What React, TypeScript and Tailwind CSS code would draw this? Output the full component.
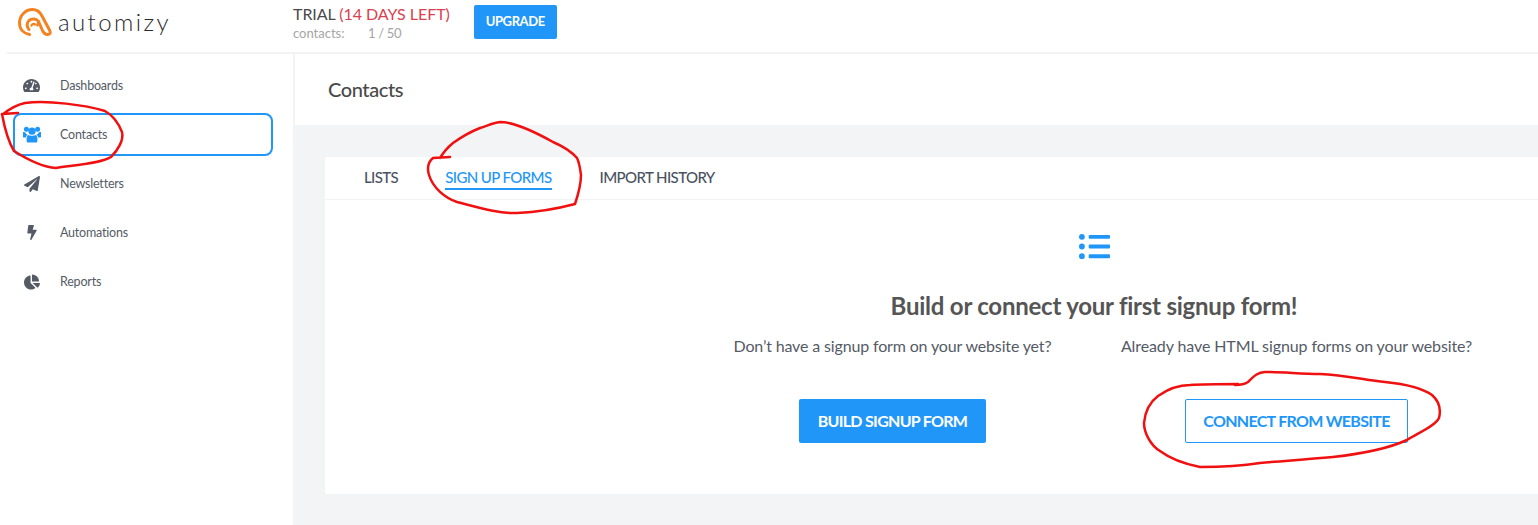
import { FaBolt, FaChartPie, FaListUl, FaPaperPlane, FaTachometerAlt } from "react-icons/fa";

function UsersIcon({ className }: { className?: string }) {
  return (
    <svg viewBox="0 0 18 17" className={className} fill="currentColor">
      <circle cx="3.4" cy="3.2" r="2.5" />
      <circle cx="14.6" cy="3.2" r="2.5" />
      <circle cx="9" cy="5.2" r="3.6" />
      <path d="M0 6.4 C0 5.8 1 6 2.2 6.4 C3 7.5 3.6 8.2 4.6 8.8 C3.6 9.6 3 10.5 2.8 11.6 H1 C.3 11.6 0 11 0 10.4 Z" />
      <path d="M18 6.4 C18 5.8 17 6 15.8 6.4 C15 7.5 14.4 8.2 13.4 8.8 C14.4 9.6 15 10.5 15.2 11.6 H17 C17.7 11.6 18 11 18 10.4 Z" />
      <path d="M5.4 9 C6.5 9.9 11.5 9.9 12.6 9 C13.8 9.6 14.4 11 14.4 13 V15 C14.4 16 13.6 16.6 12.6 16.6 H5.4 C4.4 16.6 3.6 16 3.6 15 V13 C3.6 11 4.2 9.6 5.4 9 Z" />
    </svg>
  );
}

const navItems = [
  { label: "Dashboards", Icon: FaTachometerAlt, iconClass: "w-[17px] h-[17px]" },
  { label: "Contacts", Icon: UsersIcon, iconClass: "w-[18px] h-[17px]", active: true },
  { label: "Newsletters", Icon: FaPaperPlane, iconClass: "w-[16px] h-[16px]" },
  { label: "Automations", Icon: FaBolt, iconClass: "w-[10px] h-[15px]" },
  { label: "Reports", Icon: FaChartPie, iconClass: "w-[16px] h-[16px]" },
];

function Logo() {
  return (
    <div className="flex items-center gap-[6px]">
      <svg viewBox="0 0 34 28" className="w-[34px] h-[28px]" fill="none" stroke="#f58220" strokeWidth="3" strokeLinecap="round" strokeLinejoin="round">
        <path d="M11.5 26.5 C5.5 25.5 1.5 21 1.5 15 C1.5 7.5 7.5 1.5 14.5 1.5 C19 1.5 22 4 24 8 L31.5 22 C33 25 32 26.5 29.5 26.5 C27 26.5 25.5 25 24.5 22.5 L20.5 13.5" />
        <path d="M11 21.5 C8.5 19 8.5 15 11 12.5 C14 10 18.5 10.5 20.5 13.5 C20.5 15.5 20 16.5 19.5 17" />
        <path d="M13.5 17.5 C14.5 15.5 16.5 15.5 17 16.5" strokeWidth="2.4" />
      </svg>
      <span className="font-['Lato',sans-serif] font-light text-[24px] leading-none tracking-[0.1em] text-[#2b2b2b]">automizy</span>
    </div>
  );
}

function Header() {
  return (
    <header className="h-[54px] ml-[7px] flex items-start bg-white border-b-2 border-[#f2f3f4]">
      <div className="w-[286px] pl-[11px] pt-[8px]">
        <Logo />
      </div>
      <div className="pt-[4px]">
        <div className="text-[16px] leading-[19px] tracking-[-0.05px] text-[#4a4a4a]">
          TRIAL <span className="text-[#d9414f]">(14 DAYS LEFT)</span>
        </div>
        <div className="flex text-[13px] leading-[16px] mt-[2px] text-[#a5a5a5]">
          <span className="w-[75px]">contacts:</span>
          <span className="tracking-[-0.3px]">1 / 50</span>
        </div>
      </div>
      <button className="ml-[24px] mt-[5px] w-[83px] h-[34px] rounded-[2px] bg-[#2196f9] text-white text-[13px] tracking-[-0.4px] font-bold">UPGRADE</button>
    </header>
  );
}

function Sidebar() {
  return (
    <aside className="w-[293px] shrink-0 bg-white pl-[13px] pt-[10px] flex flex-col gap-[6px]">
      {navItems.map(({ label, Icon, iconClass, active }) => (
        <div
          key={label}
          className={`w-[260px] h-[43px] flex items-center rounded-[8px] border-2 ${active ? "border-[#2196f9]" : "border-transparent"}`}
        >
          <div className="w-[33px] flex justify-center">
            <Icon className={`${iconClass} ${active ? "text-[#2196f9]" : "text-[#555b66]"}`} />
          </div>
          <span className="ml-[12px] mt-[2px] text-[12.5px] tracking-[-0.2px] text-[#555b66]">{label}</span>
        </div>
      ))}
    </aside>
  );
}

function SignupPanel() {
  return (
    <section className="ml-[32px] mt-[32px] w-[1538px] h-[337px] bg-white rounded-[3px]">
      <nav className="h-[43px] pl-[39px] flex gap-[47px] border-b border-[#f2f3f4] text-[15px] font-medium tracking-[-0.6px] text-[#4a5260]">
        <span className="pt-[9px]">LISTS</span>
        <span className="h-[33px] pt-[9px] text-[#2196f9] border-b-2 border-[#2196f9]">SIGN UP FORMS</span>
        <span className="pt-[9px] ml-[1px]">IMPORT HISTORY</span>
      </nav>
      <div className="flex flex-col items-center pt-[31px]">
        <FaListUl className="w-[31px] h-[31px] text-[#2196f9]" />
        <h2 className="mt-[28px] text-[24px] leading-[32px] tracking-[-0.23px] font-bold text-[#555555]">Build or connect your first signup form!</h2>
        <div className="mt-[12px] grid grid-cols-[405px_403px] justify-center text-center text-[16px] leading-[24px] text-[#555b66]">
          <div className="flex flex-col items-center">
            <p className="tracking-[-0.15px]">Don’t have a signup form on your website yet?</p>
            <button className="mt-[41px] w-[187px] h-[44px] rounded-[2px] bg-[#2196f9] text-white text-[16px] tracking-[-0.7px] font-bold">BUILD SIGNUP FORM</button>
          </div>
          <div className="flex flex-col items-center">
            <p className="tracking-[-0.1px]">Already have HTML signup forms on your website?</p>
            <button className="mt-[41px] w-[223px] h-[44px] rounded-[2px] border border-[#2196f9] text-[#2196f9] text-[16px] tracking-[-0.7px] font-bold">CONNECT FROM WEBSITE</button>
          </div>
        </div>
      </div>
    </section>
  );
}

function Scribbles() {
  return (
    <svg className="absolute inset-0 w-[1538px] h-[525px] pointer-events-none" viewBox="0 0 1538 525" fill="none" stroke="#f01010" strokeWidth="2.5" strokeLinecap="round" strokeLinejoin="round">
      <path d="M18 113 L2 114 C4 125 8 141 14 151 C25 158 42 167 56 168 C76 165 102 163 111 157 C118 150 124 140 122 132 C118 122 112 115 105 111 C85 105 48 100 25 103 C15 105 8 110 2 115" />
      <path d="M450 157 L433 158 C428 162 427 168 429 175 C433 188 445 198 457 202 C480 208 500 214 517 213 C540 212 560 208 575 204 C578 195 581 185 581 175 C580 167 578 160 577 158 C570 150 560 145 553 142 C535 132 515 122 500 122 C492 123 487 126 480 128 C470 132 460 138 453 143 C447 148 443 153 440 158" />
      <path d="M1235 385 C1240 385 1245 384 1248 382 C1254 376 1258 372 1265 372 C1285 372 1300 374 1320 374 C1345 375 1365 380 1385 382 C1405 384 1422 388 1432 395 C1440 402 1441 410 1439 418 C1435 426 1420 432 1407 440 C1385 450 1360 454 1333 457 C1300 460 1280 461 1260 463 C1235 467 1215 467 1200 467 C1185 464 1172 460 1160 451 C1150 445 1144 432 1144 423 C1145 412 1150 402 1158 396 C1168 389 1180 385 1190 385 C1205 384 1220 384 1238 384" />
    </svg>
  );
}

export default function App() {
  return (
    <div className="relative w-[1538px] h-[525px] overflow-hidden bg-white font-['Lato',sans-serif] flex flex-col">
      <Header />
      <div className="flex flex-1 min-h-0">
        <Sidebar />
        <main className="flex-1 min-w-0 bg-[#f3f4f6] overflow-hidden">
          <div className="ml-[2px] h-[71px] bg-white pl-[33px] pb-[2px] flex items-center text-[20px] tracking-[-0.4px] font-medium text-[#4a4a4a]">
            Contacts
          </div>
          <SignupPanel />
        </main>
      </div>
      <Scribbles />
    </div>
  );
}
